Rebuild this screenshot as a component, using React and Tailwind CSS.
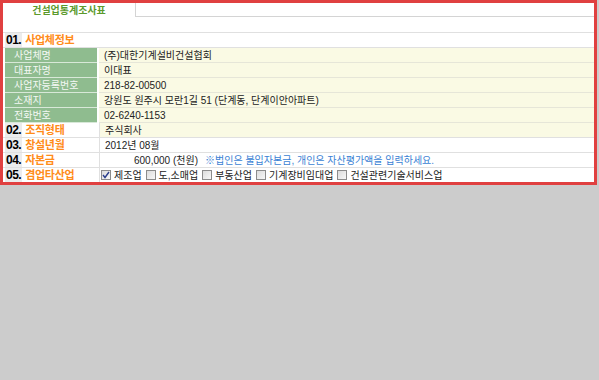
import React from "react";

const infoRows = [
  ["사업체명", "(주)대한기계설비건설협회"],
  ["대표자명", "이대표"],
  ["사업자등록번호", "218-82-00500"],
  ["소재지", "강원도 원주시 모란1길 51 (단계동, 단계이안아파트)"],
  ["전화번호", "02-6240-1153"],
];

const industries = [
  ["제조업", true],
  ["도,소매업", false],
  ["부동산업", false],
  ["기계장비임대업", false],
  ["건설관련기술서비스업", false],
];

function CheckBox({ checked }) {
  return (
    <span className="w-[10px] h-[10px] shrink-0 border border-[#8c8c8c] bg-gradient-to-br from-[#dcdcdc] to-[#f8f8f8] flex items-center justify-center">
      {checked && (
        <svg width="8" height="8" viewBox="0 0 8 8">
          <path d="M1 4 L3 6.5 L7 1" fill="none" stroke="#2b3f8c" strokeWidth="1.4" />
        </svg>
      )}
    </span>
  );
}

function SectionLabel({ num, text }) {
  return (
    <div className="w-[92px] ml-[2px] h-full flex items-center">
      <span className="h-full px-[1px] bg-[#ececec] flex items-center font-bold text-[12px] text-black tracking-[-0.5px]">
        {num}
      </span>
      <span className="ml-[3px] font-bold text-[11px] text-[#ff8c1a] tracking-[-0.3px]">{text}</span>
    </div>
  );
}

export default function App() {
  return (
    <div className="w-[599px] h-[380px] bg-[#cccccc] font-['Liberation_Sans','Noto_Sans_CJK_KR',sans-serif] text-[10px] text-[#333]">
      <div className="w-[597px] h-[185px] border-[3px] border-[#e04040] bg-white flex flex-col">
        {/* tab line */}
        <div className="h-[14px] flex">
          <div className="w-[132px] flex items-center justify-center font-bold text-[10px] text-[#5c9a2c]">
            건설업통계조사표
          </div>
          <div className="flex-1 border-l border-b border-[#d4d4d4]"></div>
        </div>
        <div className="h-[16px] border-b border-[#e0e0e0]"></div>

        <div className="h-[15px] border-b border-[#e0e0e0] flex items-center">
          <SectionLabel num="01." text="사업체정보" />
        </div>

        {infoRows.map(([label, value]) => (
          <div key={label} className="h-[15px] flex">
            <div className="w-[92px] ml-[2px] bg-[#8fbc8f] border-b border-[#d8e8d8] pl-[9px] flex items-center text-[#f4f8f4]">
              {label}
            </div>
            <div className="flex-1 ml-[2px] bg-[#fafae4] border-b border-[#e6e6d8] pl-[5px] flex items-center text-[#222]">
              {value}
            </div>
          </div>
        ))}

        <div className="h-[15px] flex border-b border-[#e0e0e0]">
          <SectionLabel num="02." text="조직형태" />
          <div className="flex-1 ml-[2px] bg-[#fafae4] border-l border-[#e0e0e0] pl-[5px] flex items-center text-[#222]">
            주식회사
          </div>
        </div>

        <div className="h-[15px] flex border-b border-[#e0e0e0]">
          <SectionLabel num="03." text="창설년월" />
          <div className="flex-1 ml-[2px] border-l border-[#e0e0e0] pl-[5px] flex items-center text-[#222]">
            2012년 08월
          </div>
        </div>

        <div className="h-[15px] flex border-b border-[#e0e0e0]">
          <SectionLabel num="04." text="자본금" />
          <div className="flex-1 ml-[2px] border-l border-[#e0e0e0] flex items-center text-[#222]">
            <span className="w-[98px] text-right">600,000 (천원)</span>
            <span className="ml-[7px] text-[#3a7fd4]">※법인은 불입자본금, 개인은 자산평가액을 입력하세요.</span>
          </div>
        </div>

        <div className="h-[14px] flex">
          <SectionLabel num="05." text="겸업타산업" />
          <div className="flex-1 ml-[2px] border-l border-[#e0e0e0] pl-[1px] flex items-center gap-[4px] text-[#222]">
            {industries.map(([name, checked]) => (
              <label key={name} className="flex items-center gap-[3px]">
                <CheckBox checked={checked} />
                <span>{name}</span>
              </label>
            ))}
          </div>
        </div>
      </div>
    </div>
  );
}
